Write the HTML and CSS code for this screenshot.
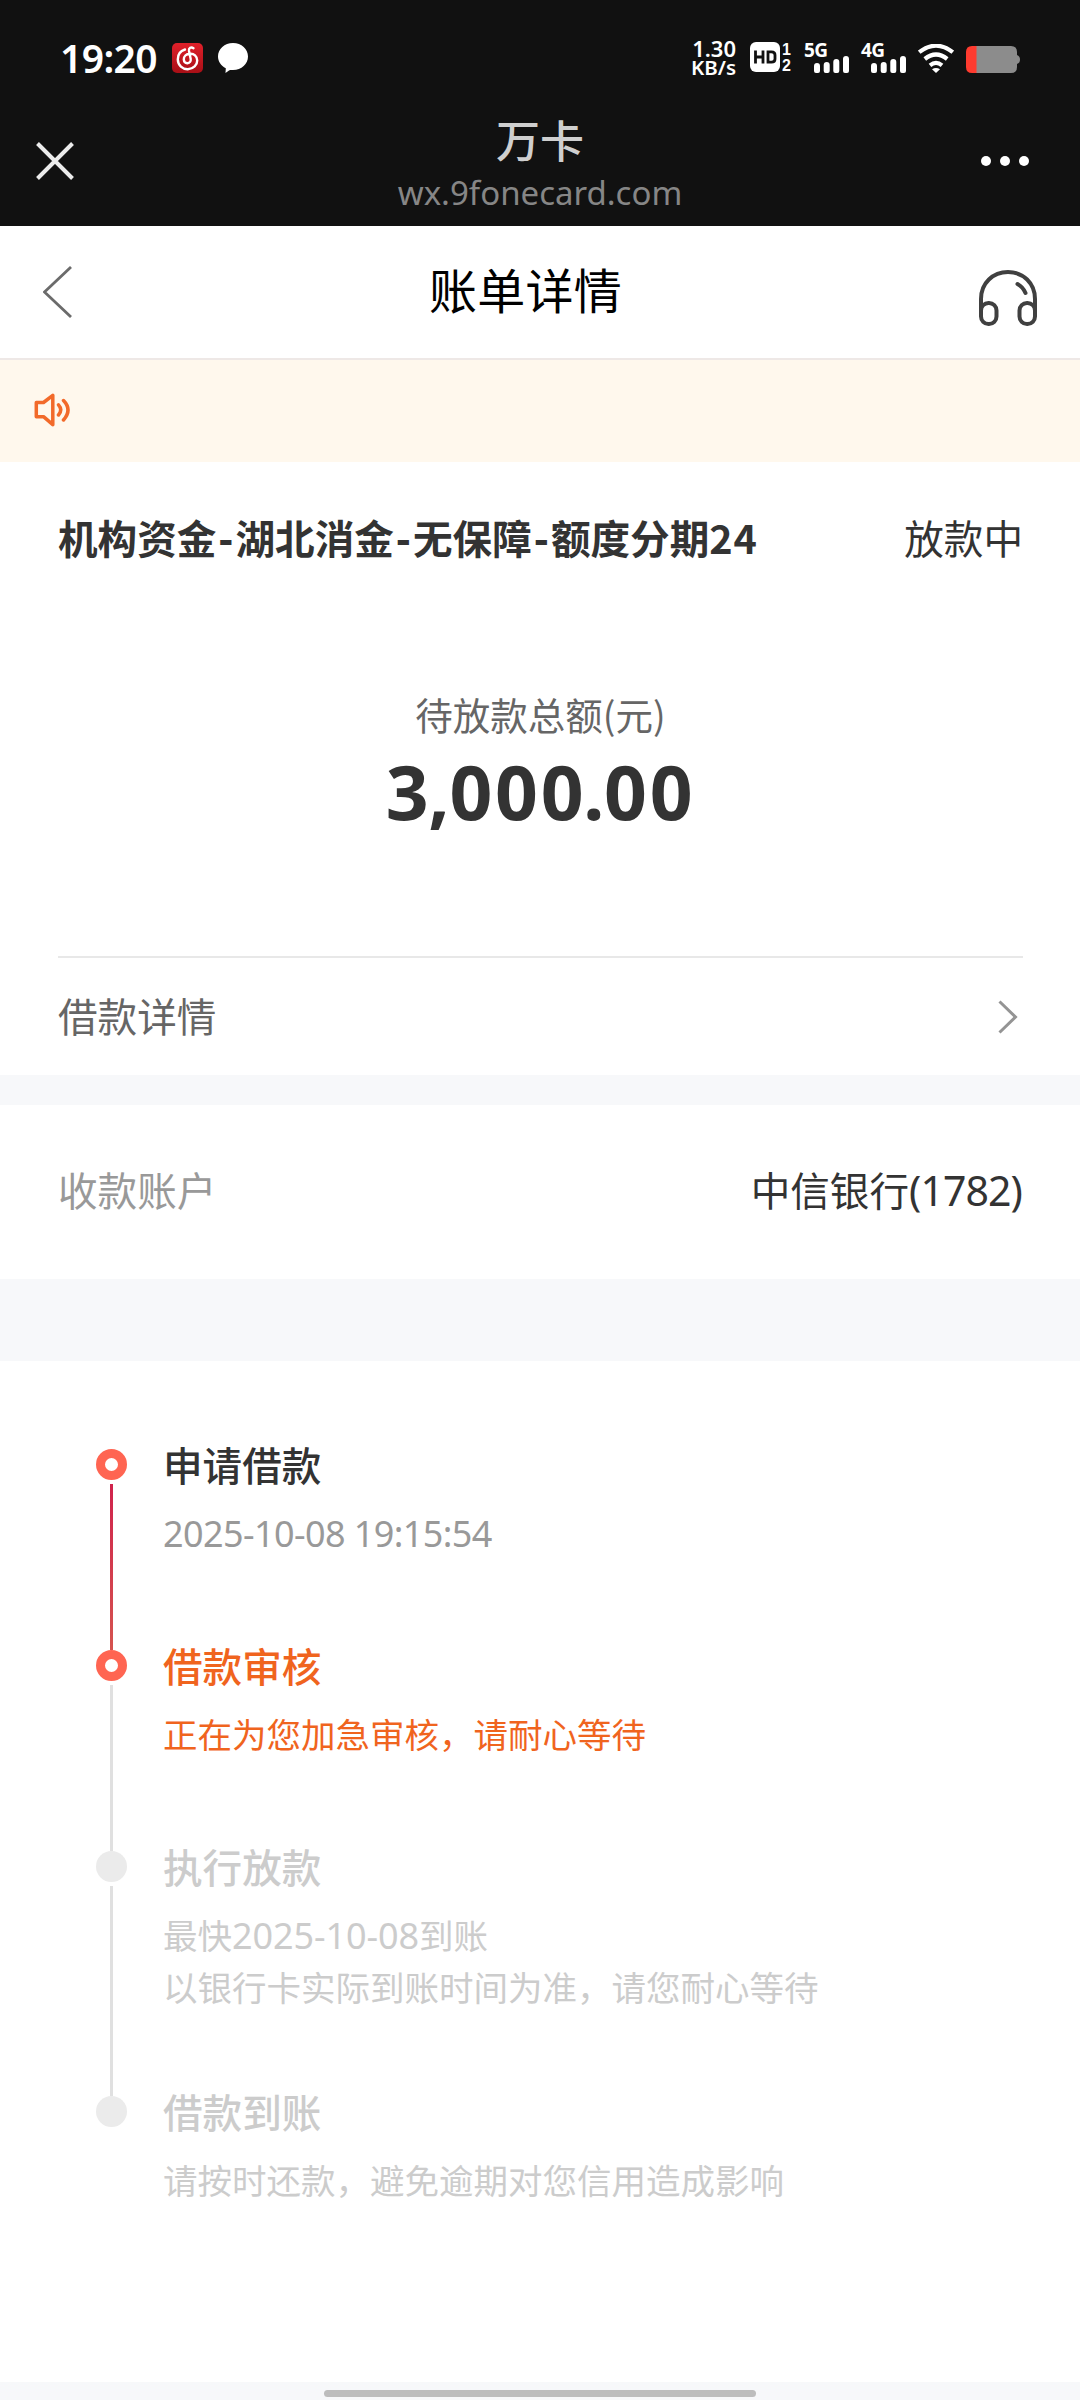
FILE: index.html
```html
<!DOCTYPE html>
<html lang="zh-CN">
<head>
<meta charset="utf-8">
<title>账单详情</title>
<link rel="stylesheet" href="styles.css">
</head>
<body>
<div class="status-bar">
  <div class="status-left">
    <span class="clock">19:20</span>
    <svg class="music-icon" viewBox="0 0 31 30">
      <defs><linearGradient id="red" x1="0" y1="0" x2="0" y2="1"><stop offset="0" stop-color="#e0202a"/><stop offset="1" stop-color="#a80f16"/></linearGradient></defs>
      <rect width="31" height="30" rx="5" fill="url(#red)"/>
      <path d="M13 6.500C8 8 5.700 12 5.800 16.500C6 22.500 10.500 26.300 15.800 26.200C21.500 26 25.300 22 25.200 17.500C25 13 22 10.500 18 10.800C14 11 11.700 13.500 11.800 16.500C12 19 13.600 20.300 15.500 20.200C17.800 20 19 18.300 18.700 16L17 8C16.500 5 19 3.500 21.500 5.200" fill="none" stroke="#fff" stroke-width="2.400" stroke-linecap="round"/>
    </svg>
    <svg class="chat-icon" viewBox="0 0 30 30"><path d="M15 0C23.500 0 30 6 30 13.500S23.500 27 15 27C13.500 27 12 26.800 11 27.500L7.500 30L7.800 25.200C3 22.800 0 18.500 0 13.500C0 6 6.500 0 15 0Z" fill="#fff"/></svg>
  </div>
  <div class="status-right">
    <div class="speed"><span>1.30</span><span class="unit">KB/s</span></div>
    <div class="hd">
      <svg class="hd-icon" viewBox="0 0 30 30"><rect width="30" height="30" rx="6" fill="#fff"/><path d="M5.500 8.500V21.500M13 8.500V21.500M5.500 15H13M18 9.800H21.500Q25 9.800 25 13V17Q25 20.200 21.500 20.200H18Z" fill="none" stroke="#111" stroke-width="2.800"/></svg>
      <div class="sims"><span>1</span><span>2</span></div>
    </div>
    <div class="cell">
      <span class="net">5G</span>
      <svg class="bars" viewBox="0 0 35 17"><path d="M0 10a3 3 0 0 1 6 0v5q0 2-2 2H2q-2 0-2-2zM9.700 9a3 3 0 0 1 6 0v6q0 2-2 2h-2q-2 0-2-2zM19.300 6a3 3 0 0 1 6 0v9q0 2-2 2h-2q-2 0-2-2zM29 3a3 3 0 0 1 6 0v12q0 2-2 2h-2q-2 0-2-2z" fill="#fff"/></svg>
    </div>
    <div class="cell">
      <span class="net">4G</span>
      <svg class="bars" viewBox="0 0 35 17"><path d="M0 10a3 3 0 0 1 6 0v5q0 2-2 2H2q-2 0-2-2zM9.700 9a3 3 0 0 1 6 0v6q0 2-2 2h-2q-2 0-2-2zM19.300 6a3 3 0 0 1 6 0v9q0 2-2 2h-2q-2 0-2-2zM29 3a3 3 0 0 1 6 0v12q0 2-2 2h-2q-2 0-2-2z" fill="#fff"/></svg>
    </div>
    <svg class="wifi" viewBox="0 0 36 29"><path d="M1.200 8.200Q18-4.800 34.800 8.200M6.800 15Q18 6 29.200 15M12 21.300Q18 16.500 24 21.300" fill="none" stroke="#fff" stroke-width="4.200"/><path d="M18 29L14 25.300Q18 22.500 22 25.300Z" fill="#fff"/></svg>
    <svg class="battery" viewBox="0 0 54 27"><path d="M10 0H45Q51 0 51 6V9Q54 10 54 13.500T51 18V21Q51 27 45 27H10Z" fill="#8c8c8c"/><path d="M10.500 0H6Q0 0 0 6V21Q0 27 6 27H10.500Z" fill="#ff3b2f"/></svg>
  </div>
</div>

<div class="browser-bar">
  <svg class="close" viewBox="0 0 38 38"><path d="M1.500 1.500L36.500 36.500M36.500 1.500L1.500 36.500" stroke="#ececec" stroke-width="4"/></svg>
  <div class="site">
    <div class="site-name">万卡</div>
    <div class="site-url">wx.9fonecard.com</div>
  </div>
  <div class="more"><i></i><i></i><i></i></div>
</div>

<header class="page-head">
  <svg class="back" viewBox="0 0 29 52"><path d="M28 1L1.500 26L28 51" fill="none" stroke="#6b6b6b" stroke-width="2.800"/></svg>
  <h1>账单详情</h1>
  <svg class="headset" viewBox="0 0 58 56"><g fill="none" stroke="#404040" stroke-width="4" stroke-linecap="round"><path d="M2 43V29C2 13 14 2 29 2S56 13 56 29V43"/><rect x="2" y="33" width="15.500" height="21" rx="7.500"/><rect x="40.500" y="33" width="15.500" height="21" rx="7.500"/><path d="M38.500 14Q44 17 46.500 23"/></g></svg>
</header>

<div class="notice">
  <svg viewBox="0 0 37 34"><g fill="none" stroke="#f26a2a" stroke-width="3.500" stroke-linecap="round" stroke-linejoin="round"><path d="M2.300 9.500H9.500L18.800 2.300V31.700L9.500 23.700H2.300Z"/><path d="M24.500 11.800Q29 16.800 24.500 22M29.500 7.500Q38.500 16.800 29.500 27"/></g></svg>
</div>

<section class="bill">
  <div class="bill-top">
    <strong>机构资金<b>-</b>湖北消金<b>-</b>无保障<b>-</b>额度分期<span class="term">24</span></strong>
    <span>放款中</span>
  </div>
  <div class="sum-label">待放款总额(元)</div>
  <div class="sum">3<i>,</i>000<i>.</i>00</div>
  <div class="detail-row">
    <span>借款详情</span>
    <svg class="arrow" viewBox="0 0 20 34"><path d="M1.500 1.500L17.500 17L1.500 32.500" fill="none" stroke="#949494" stroke-width="3"/></svg>
  </div>
</section>

<section class="account">
  <span class="account-label">收款账户</span>
  <span>中信银行<span class="num">(1782)</span></span>
</section>

<section class="steps">
  <div class="step on">
    <div class="rail"><div class="dot"></div><div class="line"></div></div>
    <div class="info"><h2>申请借款</h2><p class="date"><span class="num">2025-10-08 19:15:54</span></p></div>
  </div>
  <div class="step now">
    <div class="rail"><div class="dot"></div><div class="line"></div></div>
    <div class="info"><h2>借款审核</h2><p>正在为您加急审核，请耐心等待</p></div>
  </div>
  <div class="step tall">
    <div class="rail"><div class="dot"></div><div class="line"></div></div>
    <div class="info"><h2>执行放款</h2><p>最快<span class="num">2025-10-08</span>到账<br>以银行卡实际到账时间为准，请您耐心等待</p></div>
  </div>
  <div class="step last">
    <div class="rail"><div class="dot"></div></div>
    <div class="info"><h2>借款到账</h2><p>请按时还款，避免逾期对您信用造成影响</p></div>
  </div>
</section>

<div class="home"><div class="home-pill"></div></div>
</body>
</html>
```
FILE: styles.css
```css
* { box-sizing: border-box; margin: 0; padding: 0; }
body {
  display: flex; flex-direction: column;
  width: 1080px; height: 2400px; overflow: hidden;
  background: #f7f8fa; color: #333;
  font-family: "Noto Sans CJK SC", sans-serif; font-size: 39.600px;
}
svg { display: block; flex: none; }
i { font-style: normal; }

.status-bar {
  display: flex; justify-content: space-between; align-items: center;
  height: 116px; padding: 0 60px; background: #111; color: #fff;
}
.status-left { display: flex; align-items: center; }
.clock { width: 98px; margin-right: 14px; font: 600 39px/40px "Noto Sans", sans-serif; letter-spacing: -0.600px; white-space: nowrap; }
.music-icon { width: 31px; height: 30px; margin-right: 15px; }
.chat-icon { width: 30px; height: 30px; }
.status-right { display: flex; align-items: center; }
.speed { display: flex; flex-direction: column; align-items: flex-end; width: 46px; margin-right: 14px; font: 600 22px/19px "Noto Sans", sans-serif; }
.speed .unit { font-size: 20.500px; }
.hd { display: flex; width: 43px; margin-right: 11px; }
.hd-icon { width: 30px; height: 30px; }
.sims { display: flex; flex-direction: column; width: 13px; align-items: center; font: 700 16px/16px "Liberation Sans", sans-serif; }
.cell { width: 46px; height: 30px; margin-right: 11px; display: flex; flex-direction: column; }
.net { height: 13px; font: 700 19px/14px "Noto Sans", sans-serif; letter-spacing: -0.500px; }
.bars { width: 35px; height: 17px; margin-left: 10px; }
.wifi { width: 36px; height: 29px; margin-right: 12px; }
.battery { width: 54px; height: 27px; margin-top: 3px; }

.browser-bar {
  display: flex; justify-content: space-between; align-items: center;
  height: 110px; padding: 0 51px 20px 36px; background: #111;
}
.close { width: 38px; height: 38px; }
.site { display: flex; flex-direction: column; align-items: center; gap: 6px; margin: 8px 0 0 25px; }
.site-name { font-size: 44px; line-height: 50px; font-weight: 500; color: #cfcfcf; }
.site-url { font: 33px/46px "Noto Sans", sans-serif; color: #868686; }
.more { display: flex; gap: 9px; }
.more i { width: 10px; height: 10px; border-radius: 50%; background: #fff; }

.page-head {
  display: flex; justify-content: space-between; align-items: center;
  height: 134px; padding: 0 43px; background: #fff; border-bottom: 2px solid #eee8e6;
}
.back { width: 29px; height: 52px; }
.page-head h1 { margin-bottom: 8px; font-size: 48px; font-weight: 400; line-height: 60px; letter-spacing: 0.300px; color: #000; }
.headset { width: 58px; height: 56px; margin-top: 11px; }
.notice { display: flex; align-items: center; height: 102px; padding: 0 0 2px 34px; background: #fff8ed; }
.notice svg { width: 37px; height: 34px; }

.bill { height: 613px; padding: 47px 57px 0 58px; background: #fff; }
.bill-top { display: flex; justify-content: space-between; line-height: 56px; }
.bill-top strong { font-weight: 700; }
.bill-top b { margin: 0 2px; }
.term { letter-spacing: 1px; }
.sum-label { margin-top: 122px; text-align: center; font-size: 37.500px; line-height: 54px; color: #666; }
.sum { margin-top: 10px; text-align: center; font: 700 75px/80px "Noto Sans", sans-serif; letter-spacing: 2.700px; }
.sum i { margin: 0 -3px; }
.detail-row {
  display: flex; justify-content: space-between; align-items: center;
  height: 119px; margin-top: 125px; padding-right: 5px;
  border-top: 2px solid #e8e8e8; color: #666;
}
.detail-row span { margin-bottom: 5px; }
.arrow { width: 20px; height: 34px; }
.account {
  display: flex; justify-content: space-between; align-items: center;
  height: 174px; margin-top: 30px; padding: 0 58px 7px 58px; background: #fff;
}
.account-label { color: #999; }
.account .num { font: 41px/50px "Noto Sans", sans-serif; letter-spacing: -0.900px; }

.steps { flex: 1; margin-top: 82px; padding: 88px 96px 0; background: #fff; }
.step { display: flex; gap: 36px; height: 201px; }
.step.tall { height: 245px; }
.rail { display: flex; flex-direction: column; align-items: center; width: 31px; }
.dot { flex: none; width: 31px; height: 31px; border-radius: 50%; background: #ebebeb; }
.line { flex: 1; width: 3px; margin-top: 4px; background: #e0e0e0; }
.on .dot, .now .dot { border: 9px solid #ff6552; background: #fff; }
.on .line { background: linear-gradient(#d0234c, #d5534f); }
.info h2 { font-size: 39.600px; line-height: 56px; margin-top: -13px; font-weight: 500; }
.info p { margin-top: 14px; font-size: 34.500px; line-height: 52px; color: #ccc; white-space: nowrap; }
.info .num { font: 36px/40px "Noto Sans", sans-serif; letter-spacing: -0.600px; }
.tall .info .num { letter-spacing: -0.100px; }
.info .date { color: #999; }
.now .info h2, .now .info p { color: #f0641e; }
.tall h2, .last h2 { color: #ccc; }

.home { display: flex; justify-content: center; height: 18px; padding-top: 8px; background: #f7f8fa; }
.home-pill { width: 432px; height: 7px; border-radius: 4px; background: #bdbdbd; }
```
